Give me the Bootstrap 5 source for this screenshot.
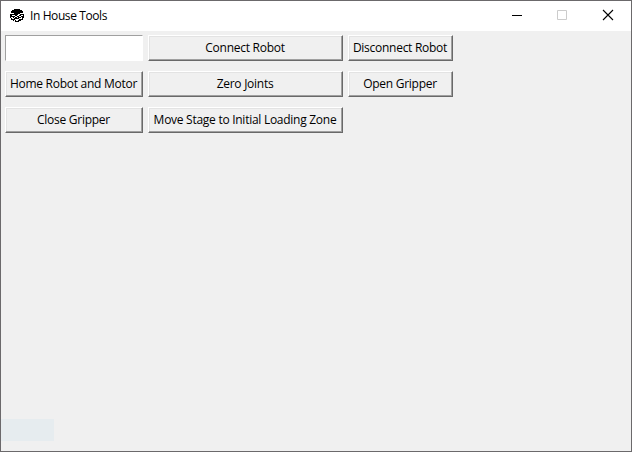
<!DOCTYPE html>
<html lang="en">
<head>
<meta charset="utf-8">
<title>In House Tools</title>
<link href="https://cdn.jsdelivr.net/npm/bootstrap@5.3.0/dist/css/bootstrap.min.css" rel="stylesheet">
<style>
body{font-family:"Open Sans","Noto Sans",sans-serif;font-size:12px;line-height:16px;color:#000}
.app-window{height:100vh;background:#f0f0f0;border:1px solid #6b696b}
.title-bar{height:30px;padding-left:9px;padding-right:1px}
.title-text{margin-left:5px;letter-spacing:-.4px}
.win-btn{width:45px;height:30px}
.tool-grid{display:grid;grid-template-columns:138px 195px 105px;grid-auto-rows:26px;gap:10px 5px;padding:4px}
.tk-btn{background:#f0f0f0;border:1px solid;border-color:#fff #696969 #696969 #fff;box-shadow:inset -1px -1px #a0a0a0,inset 1px 1px #e3e3e3;color:#000;font-size:12px;line-height:16px;white-space:nowrap;letter-spacing:-.27px;padding:0 1px 0 0}
.tk-entry{border:1px solid;border-color:#a0a0a0 #fff #fff #a0a0a0;background:#fff}
.status-patch{width:53px;height:22px;background:#e6ecef;margin-bottom:10px}
</style>
</head>
<body>
<div class="app-window d-flex flex-column overflow-hidden">
  <header class="title-bar bg-white d-flex align-items-center flex-shrink-0">
    <svg width="15" height="14" viewBox="0 0 15 14" shape-rendering="crispEdges"><path d="M4 0h6v1h2v1h1v2h-2v1h3v4h-1v2h-2v1h-2v1H5v-1H3v-1H1V9H0V5h3V4H1V2h1V1h2z"/><path fill="#fff" d="M3 4h1v1H3zM10 4h1v1h-1zM2 6h3v1H2zM8 5h2v1H8zM7 6h2v1H7zM11 6h2v1h-2zM5 7h2v1H5zM9 7h2v1H9zM1 8h2v1H1zM4 8h1v1H4zM7 8h1v1H7zM11 8h1v1h-1zM2 9h2v1H2zM9 9h3v1H9zM5 10h4v1H5zM4 11h1v1H4zM6 11h2v1H6z"/></svg>
    <span class="title-text">In House Tools</span>
    <div class="d-flex ms-auto">
      <div class="win-btn"><svg width="45" height="30"><path d="M17 14.5h10" stroke="#000"/></svg></div>
      <div class="win-btn"><svg width="45" height="30"><path d="M17.5 9.5h9v9h-9z" fill="none" stroke="#ccc"/></svg></div>
      <div class="win-btn"><svg width="45" height="30"><path d="M18 9l10 10M28 9L18 19" stroke="#000" stroke-width="1.1"/></svg></div>
    </div>
  </header>
  <main class="tool-grid">
    <input class="tk-entry w-100 rounded-0" type="text" aria-label="Command">
    <button class="tk-btn btn rounded-0">Connect Robot</button>
    <button class="tk-btn btn rounded-0">Disconnect Robot</button>
    <button class="tk-btn btn rounded-0">Home Robot and Motor</button>
    <button class="tk-btn btn rounded-0">Zero Joints</button>
    <button class="tk-btn btn rounded-0">Open Gripper</button>
    <button class="tk-btn btn rounded-0">Close Gripper</button>
    <button class="tk-btn btn rounded-0">Move Stage to Initial Loading Zone</button>
  </main>
  <div class="status-patch mt-auto"></div>
</div>
<script src="https://cdn.jsdelivr.net/npm/bootstrap@5.3.0/dist/js/bootstrap.bundle.min.js"></script>
</body>
</html>
